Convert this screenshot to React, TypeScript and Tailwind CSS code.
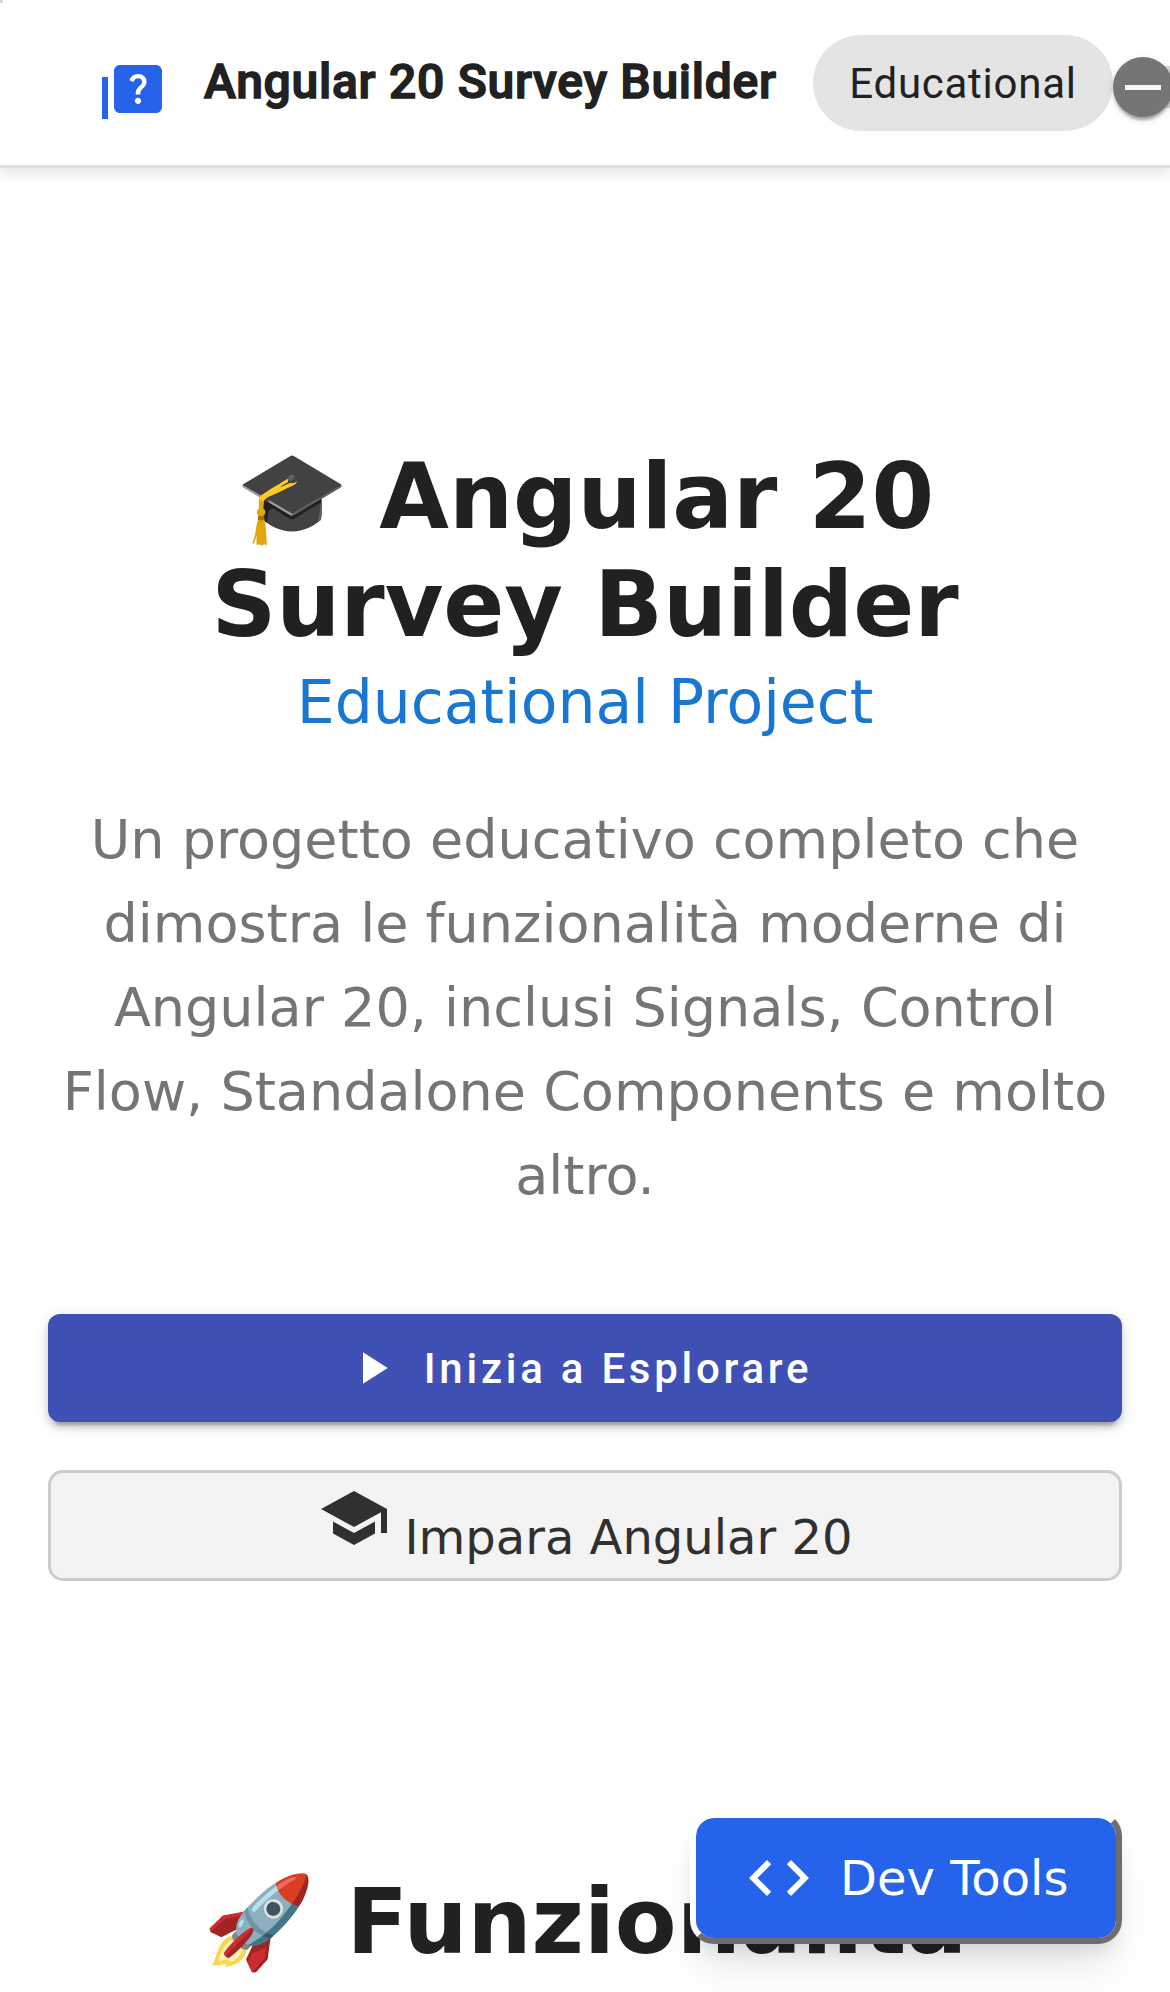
function QuizIcon() {
  return (
    <svg viewBox="0 0 24 20" className="h-[60px] w-[72px] shrink-0 fill-[#2563eb]" aria-hidden="true">
      <path d="M2 6h2v14H2z" />
      <path d="M20 2H8c-1.1 0-2 .9-2 2v12c0 1.1.9 2 2 2h12c1.1 0 2-.9 2-2V4c0-1.1-.9-2-2-2zm-5.99 13c-.59 0-1.05-.47-1.05-1.05 0-.59.47-1.04 1.05-1.04.59 0 1.04.45 1.04 1.04-.01.58-.45 1.05-1.04 1.05zm2.5-6.17c-.63.93-1.23 1.21-1.56 1.81-.13.24-.18.4-.18 1.18h-1.52c0-.41-.06-1.08.26-1.65.41-.73 1.18-1.16 1.63-1.8.48-.68.21-1.94-1.14-1.94-.88 0-1.32.67-1.5 1.23l-1.37-.57C11.51 5.96 12.52 5 13.99 5c1.23 0 2.08.56 2.51 1.26.37.61.58 1.73.01 2.57z" />
    </svg>
  );
}

function Header() {
  return (
    <header className="relative z-10 flex h-[168px] shrink-0 items-start border-b-[3px] border-[#e0e0e0] bg-white pl-24 font-['Roboto',sans-serif] text-[#212121] shadow-[0_6px_12px_0_rgba(0,0,0,0.1)]">
      <div className="pt-[59px]">
        <QuizIcon />
      </div>
      <span className="ml-9 mt-[46px] w-[609px] shrink-0 whitespace-nowrap text-[48px] font-medium leading-[72px] tracking-[0.74px] [-webkit-text-stroke:1.5px_#212121]">
        Angular 20 Survey Builder
      </span>
      <span className="mt-[35px] flex h-24 w-[300px] shrink-0 items-center justify-center rounded-full bg-[#e4e4e4] text-[42px] tracking-[0.75px]">
        Educational
      </span>
      <div className="relative mt-[57px] h-[60px] w-[57px] shrink-0 overflow-visible">
        <div className="absolute left-[30px] top-[9px] h-[42px] w-[27px] bg-[#d6d6d6]" />
        <div className="absolute left-0 top-0 flex size-[60px] items-center justify-center rounded-full bg-[#757575] shadow-[0_6px_3px_-3px_rgba(0,0,0,0.2),0_3px_3px_0_rgba(0,0,0,0.14),0_3px_9px_0_rgba(0,0,0,0.12)]">
          <div className="h-[5px] w-9 bg-[#fafafa]" />
        </div>
      </div>
    </header>
  );
}

function Hero() {
  return (
    <section className="flex flex-col px-12 pt-[275px] text-center">
      <h1 className="text-[90px] font-bold leading-[108px] text-[#212121]">
        🎓 Angular 20
        <br />
        Survey Builder
      </h1>
      <p className="mt-[1px] text-[60px] leading-[84px] text-[#1976d2]">Educational Project</p>
      <p className="mt-[54px] text-[54px] leading-[84px] text-[#757575]">
        Un progetto educativo completo che dimostra le funzionalità moderne di Angular 20, inclusi Signals, Control
        Flow, Standalone Components e molto altro.
      </p>
      <button className="mt-24 flex h-[108px] items-center justify-center rounded-xl bg-[#3f51b5] pr-[13px] font-['Roboto',sans-serif] text-[42px] font-medium tracking-[3.75px] text-white shadow-[0_9px_3px_-6px_rgba(0,0,0,0.2),0_6px_6px_0_rgba(0,0,0,0.14),0_3px_15px_0_rgba(0,0,0,0.12)]">
        <svg viewBox="0 0 24 24" className="mr-[25px] size-[54px] fill-white" aria-hidden="true">
          <path d="M8 5v14l11-7z" />
        </svg>
        Inizia a Esplorare
      </button>
      <button className="mt-12 flex h-[111px] items-start justify-center rounded-[15px] border-[3px] border-[#ccc] bg-[#f3f3f3] text-[48px] leading-[56px] text-[#303030]">
        <svg viewBox="0 0 24 24" className="ml-px mr-[14px] mt-[9px] size-[72px] fill-[#303030]" aria-hidden="true">
          <path d="M5 13.18v4L12 21l7-3.82v-4L12 17l-7-3.82zM12 3L1 9l11 6 9-4.91V17h2V9L12 3z" />
        </svg>
        <span className="mt-[36px]">Impara Angular 20</span>
      </button>
    </section>
  );
}

function DevToolsButton() {
  return (
    <button className="absolute bottom-12 right-12 flex h-[132px] w-[432px] items-center rounded-[24px] border-[6px] border-b-[#6e6e6e] border-l-white border-r-[#6e6e6e] border-t-white bg-[#2563eb] bg-clip-padding pl-[47px] text-[48px] text-white shadow-[0_30px_45px_-9px_rgba(0,0,0,0.1),0_12px_18px_-6px_rgba(0,0,0,0.1)]">
      <svg viewBox="0 0 24 24" className="mr-[25px] size-[72px] shrink-0 fill-white" aria-hidden="true">
        <path d="M9.4 16.6L4.8 12l4.6-4.6L8 6l-6 6 6 6 1.4-1.4zm5.2 0l4.6-4.6-4.6-4.6L16 6l6 6-6 6-1.4-1.4z" />
      </svg>
      <span className="whitespace-nowrap">Dev Tools</span>
    </button>
  );
}

export default function App() {
  return (
    <div className="relative flex h-[1992px] flex-col overflow-hidden bg-white font-['DejaVu_Sans',sans-serif]">
      <Header />
      <div className="absolute left-0 top-0 z-20 size-[3px] bg-[#d6d6d6]" />
      <Hero />
      <h2 className="mt-[287px] whitespace-nowrap text-center text-[90px] font-bold leading-[108px] text-[#212121]">
        🚀 Funzionalità
      </h2>
      <DevToolsButton />
    </div>
  );
}
